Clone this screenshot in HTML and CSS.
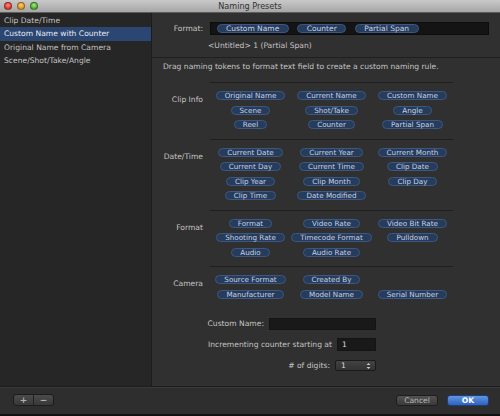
FILE: index.html
```html
<!DOCTYPE html>
<html lang="en">
<head>
    <meta charset="UTF-8">
    <title>Naming Presets</title>
    <link rel="stylesheet" href="styles.css">
</head>
<body>
    <div class="window">
        <div class="titlebar">
            <div class="lights">
                <span class="light red"></span>
                <span class="light amber"></span>
                <span class="light green"></span>
            </div>
            <div class="title">Naming Presets</div>
        </div>

        <div class="main">
            <ul class="sidebar">
                <li>Clip Date/Time</li>
                <li class="selected">Custom Name with Counter</li>
                <li>Original Name from Camera</li>
                <li>Scene/Shot/Take/Angle</li>
            </ul>

            <div class="panel">
                <div class="format-row">
                    <span class="label">Format:</span>
                    <div class="format-field">
                        <span class="token big">Custom Name</span>
                        <span class="token big">Counter</span>
                        <span class="token big">Partial Span</span>
                    </div>
                </div>
                <div class="preview">&lt;Untitled&gt; 1 (Partial Span)</div>
                <div class="hint">Drag naming tokens to format text field to create a custom naming rule.</div>

                <div class="groups">
                    <div class="group">
                        <span class="label">Clip Info</span>
                        <div class="tokens">
                            <span class="token">Original Name</span>
                            <span class="token">Current Name</span>
                            <span class="token">Custom Name</span>
                            <span class="token">Scene</span>
                            <span class="token">Shot/Take</span>
                            <span class="token">Angle</span>
                            <span class="token">Reel</span>
                            <span class="token">Counter</span>
                            <span class="token">Partial Span</span>
                        </div>
                    </div>
                    <div class="group">
                        <span class="label">Date/Time</span>
                        <div class="tokens">
                            <span class="token">Current Date</span>
                            <span class="token">Current Year</span>
                            <span class="token">Current Month</span>
                            <span class="token">Current Day</span>
                            <span class="token">Current Time</span>
                            <span class="token">Clip Date</span>
                            <span class="token">Clip Year</span>
                            <span class="token">Clip Month</span>
                            <span class="token">Clip Day</span>
                            <span class="token">Clip Time</span>
                            <span class="token">Date Modified</span>
                        </div>
                    </div>
                    <div class="group">
                        <span class="label">Format</span>
                        <div class="tokens">
                            <span class="token">Format</span>
                            <span class="token">Video Rate</span>
                            <span class="token">Video Bit Rate</span>
                            <span class="token">Shooting Rate</span>
                            <span class="token">Timecode Format</span>
                            <span class="token">Pulldown</span>
                            <span class="token">Audio</span>
                            <span class="token">Audio Rate</span>
                        </div>
                    </div>
                    <div class="group last">
                        <span class="label">Camera</span>
                        <div class="tokens">
                            <span class="token">Source Format</span>
                            <span class="token">Created By</span>
                            <span class="blank"></span>
                            <span class="token">Manufacturer</span>
                            <span class="token">Model Name</span>
                            <span class="token">Serial Number</span>
                        </div>
                    </div>
                </div>

                <div class="form">
                    <div class="form-row">
                        <span>Custom Name:</span>
                        <span class="field wide"></span>
                    </div>
                    <div class="form-row">
                        <span>Incrementing counter starting at</span>
                        <span class="field short">1</span>
                    </div>
                    <div class="form-row">
                        <span># of digits:</span>
                        <span class="popup">1
                            <svg width="5" height="8" viewBox="0 0 5 8">
                                <path d="M0.5 3 L2.5 1 L4.5 3 Z M0.5 5 L2.5 7 L4.5 5 Z" fill="#c8c8c8"/>
                            </svg>
                        </span>
                    </div>
                </div>
            </div>
        </div>

        <div class="footer">
            <div class="segmented">
                <span>+</span>
                <span>&minus;</span>
            </div>
            <div class="actions">
                <button class="btn">Cancel</button>
                <button class="btn primary">OK</button>
            </div>
        </div>
    </div>
</body>
</html>
```

FILE: styles.css
```css
:root {
  --sidebar-bg: #262626;
  --panel-bg: #303030;
  --text: #c4c4c4;
  --token-bg: #263c5c;
  --token-border: #3d5780;
  --token-text: #c6d0e2;
  --line: #1f1f1f;
}

* { box-sizing: border-box; }

body {
  margin: 0;
  background: #111;
  font-family: "DejaVu Sans", "Liberation Sans", sans-serif;
  font-size: 7.6px;
  color: var(--text);
}

.window {
  width: 500px;
  height: 416px;
  display: flex;
  flex-direction: column;
  background: var(--panel-bg);
  border-bottom: 2px solid #111;
}

/* title bar */
.titlebar {
  height: 13px;
  flex: none;
  position: relative;
  background: linear-gradient(#c9c9c9, #a6a6a6);
  border-bottom: 1px solid #5c5c5c;
  display: flex;
  align-items: center;
  justify-content: center;
}

.lights {
  position: absolute;
  left: 4px;
  top: 2px;
  display: flex;
  gap: 5px;
}

.light {
  width: 8px;
  height: 8px;
  border-radius: 50%;
  border: 1px solid rgba(0,0,0,0.35);
}
.light.red { background: radial-gradient(circle at 50% 35%, #ff8c84, #d8362f 70%); }
.light.amber { background: radial-gradient(circle at 50% 35%, #ffd07a, #d8921e 70%); }
.light.green { background: radial-gradient(circle at 50% 35%, #a8ec86, #4ba92c 70%); }

.title {
  font-size: 8.1px;
  color: #333;
}

/* main area */
.main {
  height: 374px;
  flex: none;
  display: flex;
}

.sidebar {
  width: 152px;
  flex: none;
  margin: 0;
  padding: 1px 0 0;
  list-style: none;
  background: var(--sidebar-bg);
  border-right: 1px solid #1c1c1c;
  border-bottom: 1px solid #1c1c1c;
}

.sidebar li {
  height: 13.3px;
  line-height: 13.3px;
  padding-left: 4px;
  white-space: nowrap;
}

.sidebar li.selected {
  background: #2b4670;
  color: #e8ecf2;
}

.panel {
  flex: 1;
  padding-top: 9px;
  border-bottom: 1px solid #1c1c1c;
}

.label {
  width: 51px;
  flex: none;
  text-align: right;
}

.format-row {
  display: flex;
  align-items: center;
  gap: 7px;
}

.format-field {
  width: 279px;
  height: 13px;
  background: #141414;
  border: 1px solid #0c0c0c;
  display: flex;
  align-items: center;
  gap: 8.5px;
  padding-left: 5.5px;
}

.token {
  height: 9px;
  line-height: 7px;
  padding: 0 8px;
  border-radius: 5px;
  background: var(--token-bg);
  border: 1px solid var(--token-border);
  color: var(--token-text);
  font-size: 7.2px;
  white-space: nowrap;
}

.token.big {
  font-size: 7.5px;
  padding: 0 8.5px;
}

.preview {
  padding-left: 56px;
  margin-top: 6px;
  line-height: 10px;
}

.hint {
  margin-top: 6px;
  border-top: 1px solid var(--line);
  padding: 4px 0 0 11px;
  line-height: 10px;
}

.groups {
  margin-top: 10px;
}

.group {
  display: flex;
  align-items: flex-start;
  gap: 7px;
}

.group .label {
  padding-top: 13px;
  line-height: 10px;
}

.tokens {
  width: 243px;
  display: grid;
  grid-template-columns: repeat(3, 81px);
  row-gap: 5.5px;
  justify-items: center;
  border-top: 1px solid var(--line);
  padding: 8px 0 9.5px;
}

.group.last .tokens {
  padding-bottom: 0;
}

/* counter form */
.form {
  width: 224px;
  margin-top: 18.5px;
  display: flex;
  flex-direction: column;
  align-items: flex-end;
  gap: 8px;
}

.form-row {
  height: 13px;
  display: flex;
  align-items: center;
  gap: 5px;
}

.field {
  height: 13px;
  background: #191919;
  border: 1px solid #141414;
  padding-left: 4px;
  line-height: 11px;
  color: #ddd;
}
.field.wide { width: 107px; height: 12px; }
.field.short { width: 39px; }

.popup {
  width: 41px;
  height: 11px;
  display: flex;
  align-items: center;
  justify-content: space-between;
  padding: 0 4px 0 5px;
  border: 1px solid #1a1a1a;
  border-radius: 2px;
  background: linear-gradient(#424242, #333);
  color: #ddd;
}

/* footer */
.footer {
  flex: 1;
  display: flex;
  justify-content: space-between;
  align-items: flex-start;
  padding: 6px 11px 0 13px;
  border-top: 1px solid #3a3a3a;
  background: #2e2e2e;
}

.segmented {
  width: 41px;
  height: 12px;
  display: flex;
  border: 1px solid #1c1c1c;
  border-radius: 3px;
  background: linear-gradient(#4b4b4b, #383838);
  color: #b0b0b0;
  font-weight: bold;
  font-size: 9px;
}

.segmented span {
  flex: 1;
  text-align: center;
  line-height: 10px;
}

.segmented span + span {
  border-left: 1px solid #232323;
}

.actions {
  display: flex;
  gap: 9px;
  padding-top: 1px;
}

.btn {
  width: 42px;
  height: 11px;
  padding: 0;
  border: 1px solid #1e1e1e;
  border-radius: 3px;
  background: linear-gradient(#525252, #3a3a3a);
  color: #b8b8b8;
  font-family: inherit;
  font-size: 7.6px;
  line-height: 9px;
}

.btn.primary {
  background: linear-gradient(#6195e2, #2e62bd);
  border-color: #1d3e78;
  color: #fff;
  font-weight: bold;
}
```
